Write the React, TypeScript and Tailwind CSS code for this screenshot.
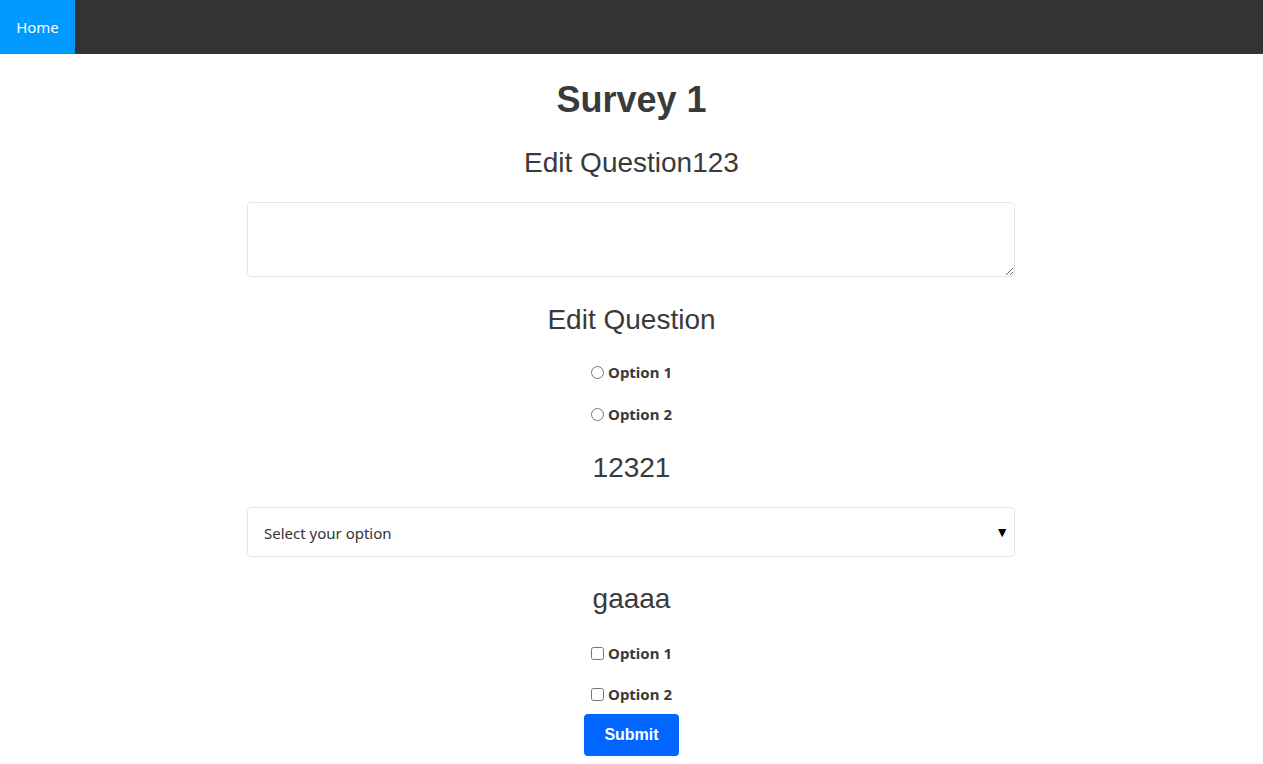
import React from "react";

export default function App() {
  const sans = { fontFamily: '"Liberation Sans", Arial, sans-serif' };
  return (
    <div className="min-h-screen bg-white text-[#3a3a3a]" style={sans}>
      <nav className="h-[54px] bg-[#333] flex">
        <a className="w-[75px] h-full bg-[#0099ff] text-white flex items-center justify-center text-[15px] font-['Noto_Sans',sans-serif]">
          Home
        </a>
      </nav>
      <main className="w-[769px] mx-auto flex flex-col items-center">
        <h1 className="mt-[24px] h-[44px] leading-[44px] text-[36px] font-bold">Survey 1</h1>
        <h2 className="mt-[23px] h-[36px] leading-[36px] text-[28px]">Edit Question123</h2>
        <textarea className="mt-[21px] block self-start w-[768px] h-[75px] border border-[#e6e6e6] rounded-[4px] resize-y" />
        <h2 className="mt-[25px] h-[36px] leading-[36px] text-[28px]">Edit Question</h2>
        <label className="mt-[22px] h-[24px] flex items-center gap-[4px] text-[15px] font-bold font-['Noto_Sans',sans-serif]">
          <input type="radio" name="q1" className="m-0 w-[13px] h-[13px]" />
          Option 1
        </label>
        <label className="mt-[18px] h-[24px] flex items-center gap-[4px] text-[15px] font-bold font-['Noto_Sans',sans-serif]">
          <input type="radio" name="q1" className="m-0 w-[13px] h-[13px]" />
          Option 2
        </label>
        <h2 className="mt-[24px] h-[36px] leading-[36px] text-[28px]">12321</h2>
        <div className="mt-[21px] relative self-start w-[768px]">
          <select className="appearance-none w-full h-[50px] border border-[#e6e6e6] rounded-[4px] bg-white pl-[16px] pt-[2px] text-[15px] text-[#333] font-['Noto_Sans',sans-serif]">
            <option>Select your option</option>
          </select>
          <span className="absolute right-[6px] top-[15px] text-[14px] text-black pointer-events-none">▼</span>
        </div>
        <h2 className="mt-[24px] h-[36px] leading-[36px] text-[28px]">gaaaa</h2>
        <label className="mt-[24px] h-[24px] flex items-center gap-[4px] text-[15px] font-bold font-['Noto_Sans',sans-serif]">
          <input type="checkbox" className="m-0 w-[13px] h-[13px]" />
          Option 1
        </label>
        <label className="mt-[17px] h-[24px] flex items-center gap-[4px] text-[15px] font-bold font-['Noto_Sans',sans-serif]">
          <input type="checkbox" className="m-0 w-[13px] h-[13px]" />
          Option 2
        </label>
        <button className="mt-[8px] w-[95px] h-[42px] bg-[#0066ff] rounded-[4px] text-white font-bold text-[16px]">
          Submit
        </button>
      </main>
    </div>
  );
}
